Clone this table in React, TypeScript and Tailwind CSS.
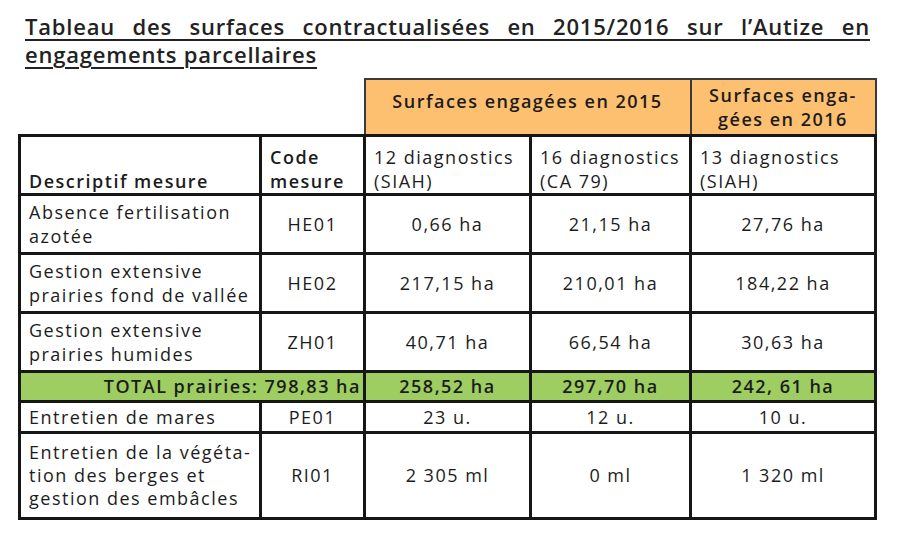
import React from "react";

const rows = [
  { label: ["Absence fertilisation", "azotée"], code: "HE01", v: ["0,66 ha", "21,15 ha", "27,76 ha"], h: "h-[59px]" },
  { label: ["Gestion extensive", "prairies fond de vallée"], code: "HE02", v: ["217,15 ha", "210,01 ha", "184,22 ha"], h: "h-[59px]" },
  { label: ["Gestion extensive", "prairies humides"], code: "ZH01", v: ["40,71 ha", "66,54 ha", "30,63 ha"], h: "h-[59px]" },
];

const cell = "border-[3px] border-[#161616] px-2";

export default function App() {
  return (
    <div
      className="w-[898px] h-[546px] bg-white text-[#1c1c1c] overflow-hidden"
      style={{ fontFamily: "'Open Sans', 'DejaVu Sans', sans-serif" }}
    >
      {/* Title */}
      <h1 className="pl-[25px] pr-[28px] pt-[12px] text-[22px] leading-[28px] font-semibold text-justify underline decoration-2 underline-offset-[4px] tracking-[0.8px] text-[#222]">
        Tableau des surfaces contractualisées en 2015/2016 sur l’Autize en engagements parcellaires
      </h1>

      <table className="ml-[18px] mt-[10px] w-[856px] table-fixed border-collapse text-[18px] leading-[24px] tracking-[1.5px]">
        <colgroup>
          <col className="w-[241px]" />
          <col className="w-[104px]" />
          <col className="w-[166px]" />
          <col className="w-[160px]" />
          <col className="w-[185px]" />
        </colgroup>
        <thead>
          <tr className="h-[56px]">
            <th colSpan={2} className="border-0"></th>
            <th colSpan={2} className="border-2 border-[#3a3a3a] bg-[#fdc070] align-top pt-[9px] font-semibold text-center">
              Surfaces engagées en 2015
            </th>
            <th className="border-2 border-[#3a3a3a] bg-[#fdc070] align-middle font-semibold text-center">
              Surfaces enga-
              <br />
              gées en 2016
            </th>
          </tr>
          <tr className="h-[59px]">
            <th className={`${cell} align-bottom text-left font-semibold pb-0 whitespace-nowrap`}>Descriptif mesure</th>
            <th className={`${cell} align-bottom text-left font-semibold pb-0 whitespace-nowrap`}>
              Code
              <br />
              mesure
            </th>
            <th className={`${cell} align-bottom text-left font-normal pb-0 whitespace-nowrap`}>
              12 diagnostics
              <br />
              (SIAH)
            </th>
            <th className={`${cell} align-bottom text-left font-normal pb-0 whitespace-nowrap`}>
              16 diagnostics
              <br />
              (CA 79)
            </th>
            <th className={`${cell} align-bottom text-left font-normal pb-0 whitespace-nowrap`}>
              13 diagnostics
              <br />
              (SIAH)
            </th>
          </tr>
        </thead>
        <tbody>
          {rows.map((r) => (
            <tr key={r.code} className={r.h}>
              <td className={`${cell} whitespace-nowrap`}>
                {r.label[0]}
                <br />
                {r.label[1]}
              </td>
              <td className={`${cell} text-center`}>{r.code}</td>
              {r.v.map((v) => (
                <td key={v} className={`${cell} text-center`}>
                  {v}
                </td>
              ))}
            </tr>
          ))}
          <tr className="h-[30px] bg-[#9ecd62] font-semibold">
            <td colSpan={2} className={`${cell} text-right pr-[2px] whitespace-nowrap`}>
              TOTAL prairies: 798,83 ha
            </td>
            <td className={`${cell} text-center`}>258,52 ha</td>
            <td className={`${cell} text-center`}>297,70 ha</td>
            <td className={`${cell} text-center`}>242, 61 ha</td>
          </tr>
          <tr className="h-[31px]">
            <td className={`${cell} whitespace-nowrap`}>Entretien de mares</td>
            <td className={`${cell} text-center`}>PE01</td>
            <td className={`${cell} text-center`}>23 u.</td>
            <td className={`${cell} text-center`}>12 u.</td>
            <td className={`${cell} text-center`}>10 u.</td>
          </tr>
          <tr className="h-[86px]">
            <td className={`${cell} whitespace-nowrap leading-[23px]`}>
              Entretien de la végéta-
              <br />
              tion des berges et
              <br />
              gestion des embâcles
            </td>
            <td className={`${cell} text-center`}>RI01</td>
            <td className={`${cell} text-center`}>2 305 ml</td>
            <td className={`${cell} text-center`}>0 ml</td>
            <td className={`${cell} text-center`}>1 320 ml</td>
          </tr>
        </tbody>
      </table>
    </div>
  );
}
